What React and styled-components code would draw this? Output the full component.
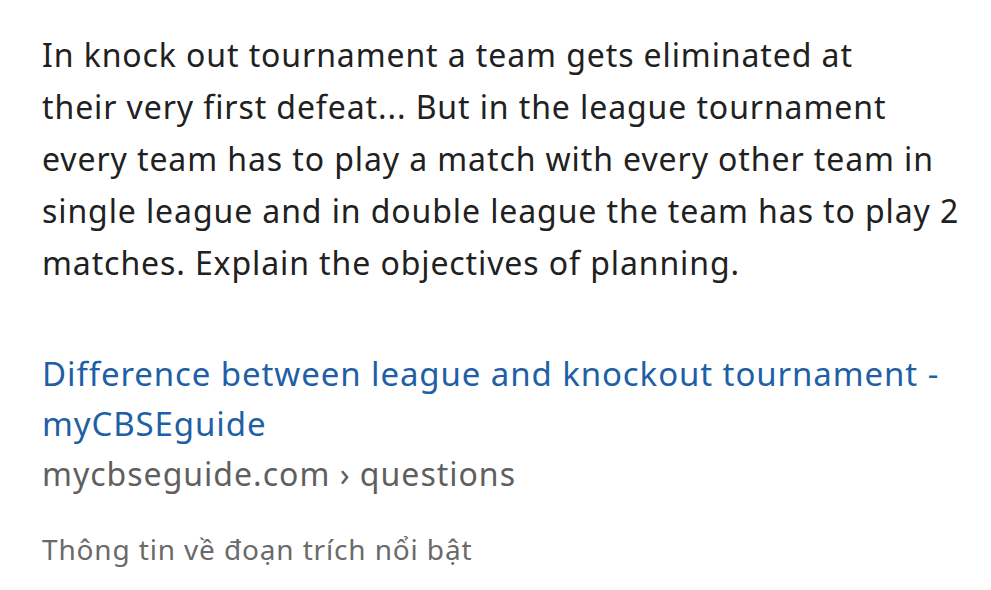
import React from 'react';
import styled, { createGlobalStyle } from 'styled-components';

const GlobalStyle = createGlobalStyle`
  html, body {
    margin: 0;
    padding: 0;
    background: #ffffff;
  }
  body {
    font-family: "Noto Sans", "Open Sans", sans-serif;
  }
`;

const Snippet = styled.section`
  width: 991px;
  height: 590px;
  box-sizing: border-box;
  padding: 29px 20px 0 42px;
  display: flex;
  flex-direction: column;
  background: #fff;
`;

const Answer = styled.p`
  margin: 0;
  font-size: 32px;
  line-height: 52px;
  letter-spacing: 0.9px;
  color: #212121;
`;

const Source = styled.div`
  margin-top: 60px;
  display: flex;
  flex-direction: column;
`;

const Title = styled.a`
  font-size: 33px;
  line-height: 50px;
  letter-spacing: 0.9px;
  color: #1f5fa6;
  text-decoration: none;
`;

const Url = styled.span`
  font-size: 32px;
  line-height: 50px;
  letter-spacing: 1px;
  color: #5f5f5f;
`;

const About = styled.p`
  margin: 26px 0 0;
  font-size: 28px;
  line-height: 48px;
  letter-spacing: 0.85px;
  color: #6a6a6a;
`;

const App = () => (
  <>
    <GlobalStyle />
    <Snippet>
      <Answer>
        In knock out tournament a team gets eliminated at
        <br />
        their very first defeat... But in the league tournament
        <br />
        every team has to play a match with every other team in
        <br />
        single league and in double league the team has to play 2
        <br />
        matches. Explain the objectives of planning.
      </Answer>
      <Source>
        <Title href="#">
          Difference between league and knockout tournament -
          <br />
          myCBSEguide
        </Title>
        <Url>mycbseguide.com › questions</Url>
      </Source>
      <About>Thông tin về đoạn trích nổi bật</About>
    </Snippet>
  </>
);

export default App;
